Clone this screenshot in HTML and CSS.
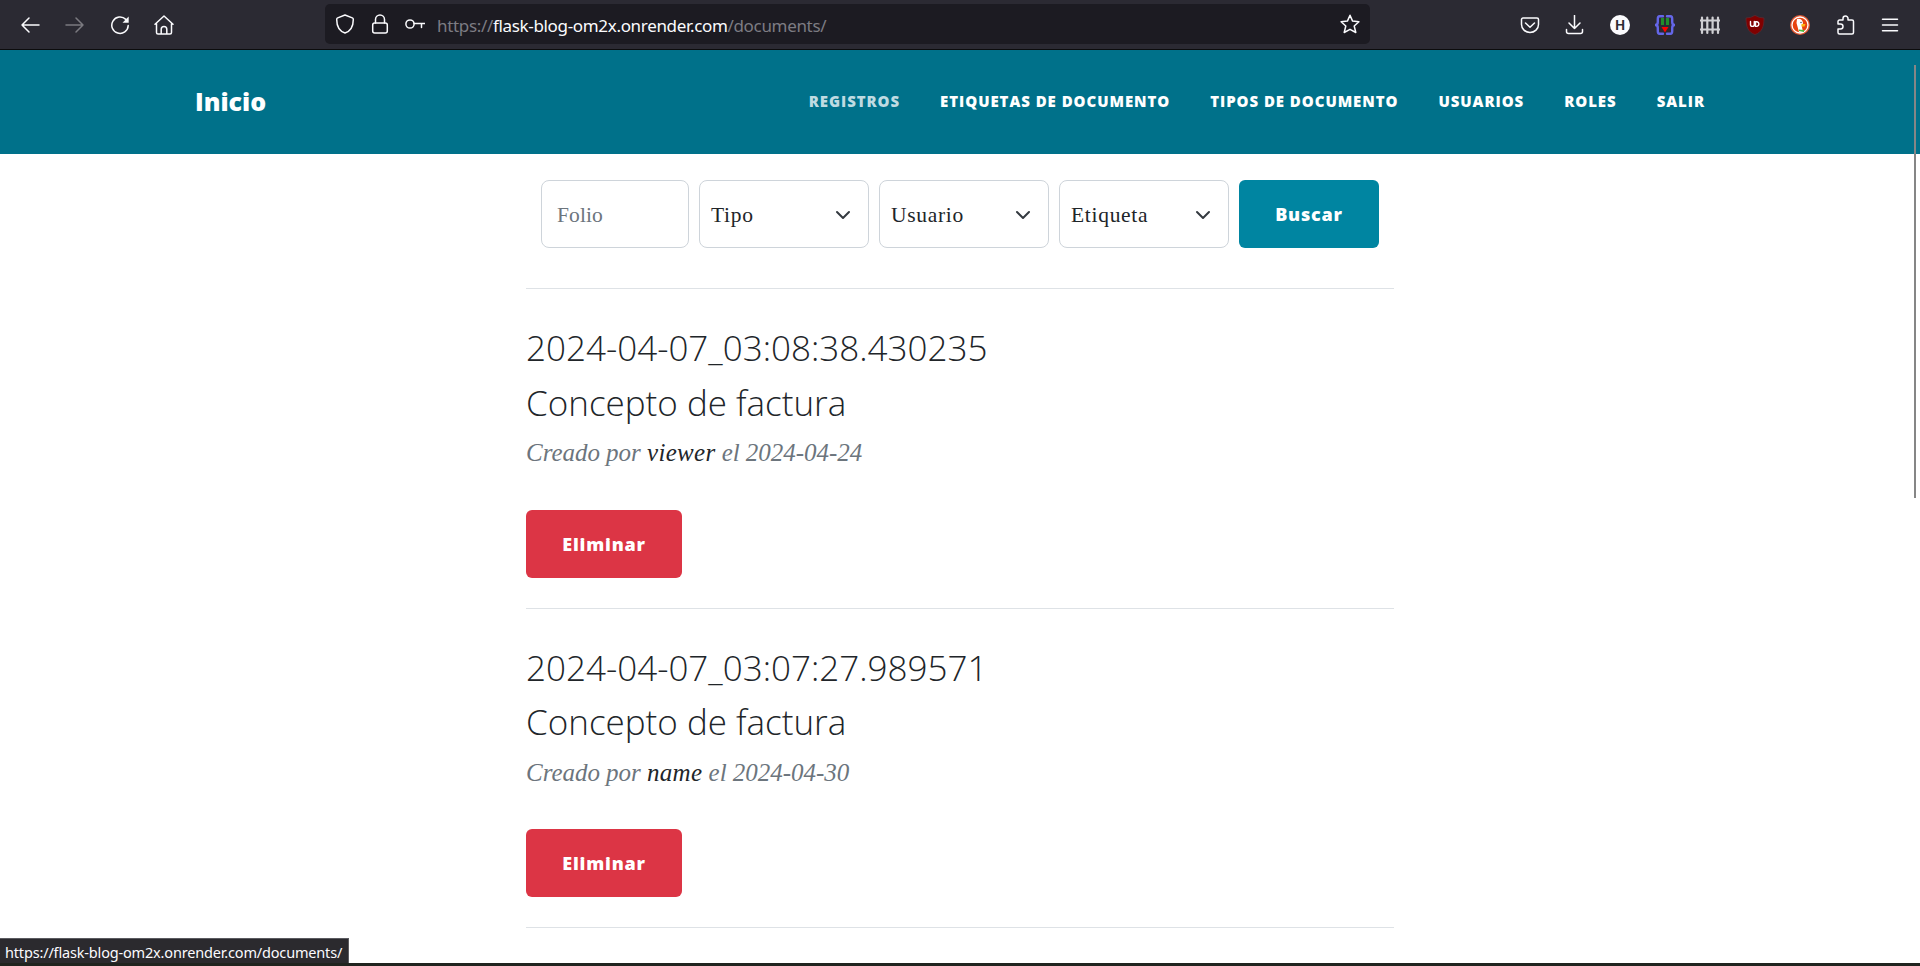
FILE: index.html
```html
<!DOCTYPE html>
<html lang="es">
<head>
<meta charset="utf-8">
<title>Registros</title>
<link rel="stylesheet" href="styles.css">
</head>
<body>
<div class="window">
  <div class="toolbar">
    <div class="nav-buttons">
      <svg class="icon" viewBox="0 0 20 20"><path d="M19 10H2M9 3L2 10l7 7"/></svg>
      <svg class="icon dim" viewBox="0 0 20 20"><path d="M1 10h17M11 3l7 7-7 7"/></svg>
      <svg class="icon" viewBox="0 0 20 20"><path d="M18.2 10.5A8.2 8.2 0 1 1 15.8 4.4"/><path class="solid" d="M18.7 1.5v6.2h-6.2z"/></svg>
      <svg class="icon" viewBox="0 0 20 20"><path d="M1 9.3L10 1l9 8.3M2.5 8.5v9a1.5 1.5 0 0 0 1.5 1.5h12a1.5 1.5 0 0 0 1.500-1.500v-9M7.200 19v-4.700a2.800 2.800 0 0 1 5.600 0V19"/></svg>
    </div>
    <div class="urlbar">
      <svg class="icon shield" viewBox="0 0 20 20"><path d="M10 1l7.300 2.900q1 .400 1 1.500C18.300 12 15 17.200 10 19 5 17.200 1.700 12 1.700 5.400q0-1.100 1-1.500z"/></svg>
      <svg class="icon lock" viewBox="0 0 20 20"><rect x="2.700" y="9" width="14.600" height="10" rx="2"/><path d="M5.500 9V5.500a4.500 4.500 0 0 1 9 0V9"/></svg>
      <svg class="icon key" viewBox="0 0 20 20"><circle cx="5" cy="10" r="4.100"/><path d="M9.100 9.500h10.500M16.500 9.500v4"/></svg>
      <span class="url">https://<b>flask-blog-om2x.onrender.com</b>/documents/</span>
      <svg class="icon star" viewBox="0 0 20 20"><path d="M10 1.300l2.600 5.800 6.300.700-4.700 4.200 1.600 6.500L10 15.300l-5.800 3.200 1.600-6.500L1.100 7.800l6.300-.700z"/></svg>
    </div>
    <div class="tools">
      <svg class="icon" viewBox="0 0 20 20"><path d="M3 3h14a1.500 1.500 0 0 1 1.500 1.500V9.500a8.500 8 0 0 1-17 0V4.500A1.500 1.500 0 0 1 3 3zM5.500 8l4.500 4.300L14.500 8"/></svg>
      <svg class="icon" viewBox="0 0 20 20"><path d="M9.500 .500v13M4 8l5.500 5.500L15 8M1.500 14.500v2A2 2 0 0 0 3.500 18.500h12a2 2 0 0 0 2-2v-2"/></svg>
      <span class="h-badge">H</span>
      <svg class="icon" viewBox="0 0 20 20"><path d="M8 1.200H4.500Q2.800 1.200 2.800 4v3Q2.800 10 .500 10q2.300 0 2.300 3v3q0 2.800 1.700 2.800H8M12 1.200h3.500q1.700 0 1.700 2.800v3q0 3 2.300 3-2.300 0-2.300 3v3q0 2.800-1.700 2.800H12" stroke="#6466e8" stroke-width="2.400"/><path d="M6 3h3v7H6zM11 3h3v7h-3z" fill="#218c2b" stroke="none"/><path d="M6.500 12h7L10 17.500z" fill="#f00" stroke="none"/></svg>
      <svg class="icon fence" viewBox="0 0 20 20"><path d="M0 5.500h20M0 14.500h20M2 18V2.500M7.300 18V2.500M12.600 18V2.500M18 18V2.500"/></svg>
      <svg class="icon" viewBox="0 0 20 20"><path d="M10 .400q4 2.600 9 2.600c0 9-2 14-9 16.600C3 17 1 12 1 3q5 0 9-2.600z" fill="#800000" stroke="#5b2830" stroke-width=".800"/><path d="M5.500 6.500v3a1.900 1.900 0 0 0 3.800 0v-3M10.500 6.700v4.700h1.500a2.400 2.400 0 0 0 0-4.700z" stroke-width="1.400"/></svg>
      <svg class="icon" viewBox="0 0 20 20"><circle cx="10" cy="10" r="10" fill="#de5833" stroke="none"/><circle cx="10" cy="10" r="8" fill="#e8420e" stroke="#fff" stroke-width="1.300"/><path d="M7 4q5-1 6 4l-1 4 1 5q-2 1-4 0L6.500 8z" fill="#fff" stroke="none"/><path d="M11.500 9h4l-1 2.500h-3.200z" fill="#fdb913" stroke="none"/><path d="M9 14.500l5 .500v2l-5-1z" fill="#4cba3c" stroke="none"/><circle cx="11" cy="7.500" r=".700" fill="#235" stroke="none"/></svg>
      <svg class="icon" viewBox="0 0 20 20"><path d="M3 9V6.500A1.500 1.500 0 0 1 4.500 5H8V3.500a2.500 2.500 0 0 1 5 0V5h4a1.500 1.500 0 0 1 1.500 1.500v11A1.500 1.500 0 0 1 17 19H4.500A1.500 1.500 0 0 1 3 17.500V14h2.500a2.500 2.500 0 0 0 0-5z"/></svg>
      <svg class="icon" viewBox="0 0 20 20"><path d="M2.500 4.200h15M2.500 10h15M2.500 15.800h15"/></svg>
    </div>
  </div>

  <header class="site-header">
    <a class="brand">Inicio</a>
    <nav class="menu">
      <a class="active">REGISTROS</a><a>ETIQUETAS DE DOCUMENTO</a><a>TIPOS DE DOCUMENTO</a><a>USUARIOS</a><a>ROLES</a><a>SALIR</a>
    </nav>
  </header>

  <main class="content">
    <form class="filters">
      <div class="field folio">Folio</div>
      <div class="field"><span>Tipo</span><svg class="chevron" viewBox="0 0 16 16"><path d="M2 5l6 6 6-6"/></svg></div>
      <div class="field"><span>Usuario</span><svg class="chevron" viewBox="0 0 16 16"><path d="M2 5l6 6 6-6"/></svg></div>
      <div class="field"><span>Etiqueta</span><svg class="chevron" viewBox="0 0 16 16"><path d="M2 5l6 6 6-6"/></svg></div>
      <button type="button" class="btn search">Buscar</button>
    </form>
    <article class="post">
      <h2>2024-04-07_03:08:38.430235</h2>
      <h2>Concepto de factura</h2>
      <p class="meta">Creado por <a>viewer</a> el 2024-04-24</p>
      <button type="button" class="btn delete">Eliminar</button>
    </article>
    <article class="post">
      <h2>2024-04-07_03:07:27.989571</h2>
      <h2>Concepto de factura</h2>
      <p class="meta">Creado por <a>name</a> el 2024-04-30</p>
      <button type="button" class="btn delete">Eliminar</button>
    </article>
    <div class="divider"></div>
  </main>
  <div class="bottom-edge"></div>
  <div class="scrollbar"></div>
  <div class="status">https://flask-blog-om2x.onrender.com/documents/</div>
</div>
</body>
</html>
```

FILE: styles.css
```css
* { box-sizing: border-box; }
body { margin: 0; background: #fff; }

.window {
  position: relative;
  display: flex;
  flex-direction: column;
  height: 966px;
  overflow: hidden;
  font-family: "Open Sans", sans-serif;
}

/* browser toolbar */
.toolbar {
  display: flex;
  flex: none;
  align-items: center;
  height: 50px;
  padding: 0 20px;
  background: #2b2a33;
  border-bottom: 1px solid #0c0c0d;
}
.icon {
  flex: none;
  width: 20px;
  height: 20px;
  fill: none;
  stroke: #fbfbfe;
  stroke-width: 1.5;
  stroke-linecap: round;
  stroke-linejoin: round;
}
.icon .solid { fill: #fbfbfe; stroke: none; }
.icon.dim { stroke: #7b7a80; }
.icon.fence { stroke: #cfcfd3; stroke-width: 2.2; }
.nav-buttons { display: flex; gap: 24.8px; width: 305px; }
.urlbar {
  display: flex;
  align-items: center;
  width: 1045px;
  height: 40px;
  margin-top: -1px;
  padding: 0 10px;
  border-radius: 5px;
  background: #1c1b22;
}
.lock { margin-left: 15px; }
.key { margin-left: 15px; }
.url {
  flex: 1;
  margin-left: 12px;
  padding-top: 3px;
  color: #7d7c83;
  font: 17px "Noto Sans", sans-serif;
  letter-spacing: -0.33px;
  white-space: nowrap;
}
.url b { color: #fbfbfe; font-weight: 400; }
.tools { display: flex; gap: 25px; margin-left: 150px; }
.h-badge {
  width: 20px;
  height: 20px;
  border-radius: 50%;
  background: #fbfbfe;
  color: #2b2a33;
  font: 700 13px/20px Inter, sans-serif;
  text-align: center;
}

/* site header */
.site-header {
  display: flex;
  flex: none;
  align-items: center;
  justify-content: space-between;
  height: 104px;
  padding: 0 215px 2px 195px;
  background: #00718a;
  color: #fff;
  font-weight: 800;
}
.brand { font-size: 25px; }
.menu { display: flex; gap: 40px; font-size: 15px; letter-spacing: 0.94px; }
.menu .active { color: #bfdbe2; }

/* page content */
.content { flex: 1; width: 868px; margin: 0 auto; min-height: 0; }
.filters { display: flex; gap: 10px; height: 134px; padding: 26px 15px 40px; }
.field {
  display: flex;
  align-items: center;
  justify-content: space-between;
  width: 170px;
  height: 68px;
  padding: 2px 17px 0 11px;
  border: 1px solid #ced4da;
  border-radius: 8px;
  color: #212529;
  font: 21.500px "Liberation Serif", serif;
  letter-spacing: 0.7px;
}
.folio { width: 148px; padding-left: 15px; color: #6c757d; letter-spacing: 0.1px; }
.chevron {
  width: 16px;
  height: 16px;
  fill: none;
  stroke: #343a40;
  stroke-width: 2;
  stroke-linecap: round;
  stroke-linejoin: round;
}
.btn {
  height: 68px;
  padding: 0;
  border: 0;
  border-radius: 6px;
  color: #fff;
  font: 800 18px "Open Sans", sans-serif;
  letter-spacing: 0.8px;
}
.search { width: 140px; background: #0085a1; }
.delete { display: block; width: 156px; background: #dc3545; }
.post {
  height: 319.500px;
  padding-top: 32px;
  border-top: 1px solid #dee2e6;
  color: #212529;
}
.post h2 { margin: 0; font-size: 35px; font-weight: 300; line-height: 54.500px; }
.meta {
  height: 79.600px;
  margin: 0;
  color: #6c757d;
  font: italic 25px/46px "Liberation Serif", serif;
  letter-spacing: -0.03px;
  white-space: nowrap;
}
.meta a { color: #212529; letter-spacing: 0.3px; }
.divider { height: 1px; background: #dee2e6; }

.bottom-edge { flex: none; height: 3px; background: #20241f; }
.scrollbar {
  position: absolute;
  top: 65px;
  right: 4px;
  width: 2px;
  height: 433px;
  background: #868686;
}
.status {
  position: absolute;
  left: 0;
  bottom: 3px;
  width: 349px;
  height: 25px;
  padding-left: 5px;
  border-top: 1px solid #5b5b60;
  border-right: 1px solid #5b5b60;
  background: #2b2a2e;
  color: #fbfbfe;
  font: 14.500px/27px "Noto Sans", sans-serif;
  letter-spacing: -0.17px;
  white-space: nowrap;
}
```
